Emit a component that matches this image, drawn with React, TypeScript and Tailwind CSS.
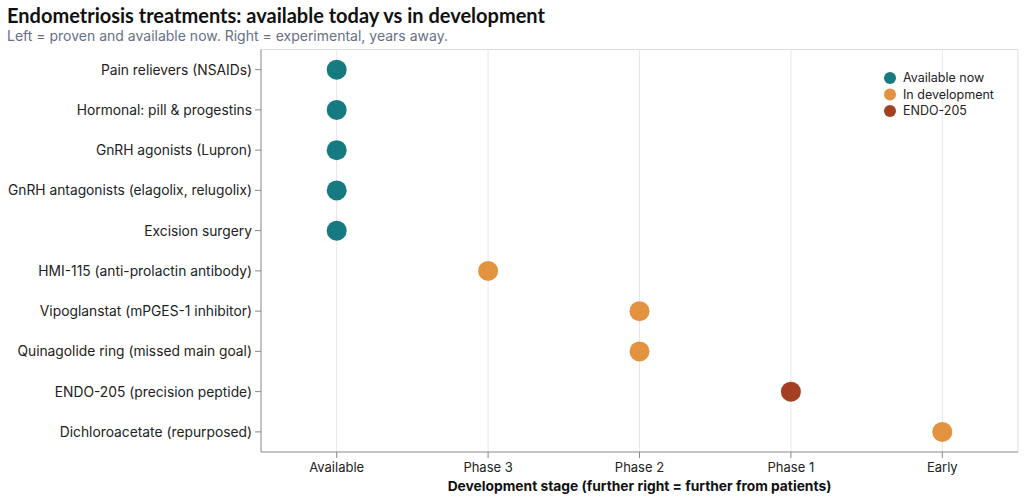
import React from "react";

const rows: { label: string; stage: number; kind: "a" | "d" | "e" }[] = [
  { label: "Pain relievers (NSAIDs)", stage: 0, kind: "a" },
  { label: "Hormonal: pill & progestins", stage: 0, kind: "a" },
  { label: "GnRH agonists (Lupron)", stage: 0, kind: "a" },
  { label: "GnRH antagonists (elagolix, relugolix)", stage: 0, kind: "a" },
  { label: "Excision surgery", stage: 0, kind: "a" },
  { label: "HMI-115 (anti-prolactin antibody)", stage: 1, kind: "d" },
  { label: "Vipoglanstat (mPGES-1 inhibitor)", stage: 2, kind: "d" },
  { label: "Quinagolide ring (missed main goal)", stage: 2, kind: "d" },
  { label: "ENDO-205 (precision peptide)", stage: 3, kind: "e" },
  { label: "Dichloroacetate (repurposed)", stage: 4, kind: "d" },
];

const stages = ["Available", "Phase 3", "Phase 2", "Phase 1", "Early"];
const colors = { a: "#167a81", d: "#e3923f", e: "#a53f21" };

const L = 261;
const R = 1018;
const T = 49.5;
const B = 452;
const xStep = (R - L) / 5;
const yStep = (B - T) / 10;
const xc = (i: number) => L + xStep * (i + 0.5);
const yc = (i: number) => T + yStep * (i + 0.5);

const font = "Inter, 'Noto Sans', sans-serif";

export default function App() {
  return (
    <div className="w-[1024px] h-[499px] bg-white overflow-hidden flex flex-col">
      <div className="pl-[7px] pt-[4px]">
        <div className="h-[22px] leading-[22px] text-[20px] font-bold text-[#111111] font-['Lato',sans-serif] whitespace-nowrap">
          Endometriosis treatments: available today vs in development
        </div>
        <div className="h-[18px] leading-[18px] pt-[1px] text-[14px] text-[#667085] font-['Inter',sans-serif] whitespace-nowrap">
          Left = proven and available now. Right = experimental, years away.
        </div>
      </div>
      <svg width={1024} height={455} viewBox="0 44 1024 455" className="block" fontFamily={font}>
        {stages.map((s, i) => (
          <line key={s} x1={xc(i)} x2={xc(i)} y1={T} y2={B} stroke="#e6e6e6" strokeWidth={1} />
        ))}
        <line x1={L} x2={R} y1={T} y2={T} stroke="#dddddd" strokeWidth={1} />
        <line x1={R} x2={R} y1={T} y2={B} stroke="#dddddd" strokeWidth={1} />
        <line x1={L} x2={L} y1={T} y2={B} stroke="#888888" strokeWidth={1} />
        <line x1={L} x2={R} y1={B} y2={B} stroke="#888888" strokeWidth={1} />
        {rows.map((r, i) => (
          <g key={r.label}>
            <line x1={L - 6} x2={L} y1={yc(i)} y2={yc(i)} stroke="#888888" strokeWidth={1} />
            <text x={L - 9} y={yc(i) + 5} textAnchor="end" fontSize={13.8} fill="#222222">
              {r.label}
            </text>
          </g>
        ))}
        {stages.map((s, i) => (
          <g key={s}>
            <line x1={xc(i)} x2={xc(i)} y1={B} y2={B + 6} stroke="#888888" strokeWidth={1} />
            <text x={xc(i)} y={472} textAnchor="middle" fontSize={13} fill="#222222">
              {s}
            </text>
          </g>
        ))}
        <text
          x={(L + R) / 2}
          y={490.5}
          textAnchor="middle"
          fontSize={13.8}
          fontWeight={700}
          fill="#111111"
        >
          Development stage (further right = further from patients)
        </text>
        {rows.map((r, i) => (
          <circle key={r.label} cx={xc(r.stage)} cy={yc(i)} r={10} fill={colors[r.kind]} />
        ))}
        {[
          { t: "Available now", c: colors.a },
          { t: "In development", c: colors.d },
          { t: "ENDO-205", c: colors.e },
        ].map((l, i) => (
          <g key={l.t}>
            <circle cx={890} cy={78 + i * 16.5} r={6} fill={l.c} />
            <text x={903} y={78 + i * 16.5 + 4.3} fontSize={12.5} fill="#222222">
              {l.t}
            </text>
          </g>
        ))}
      </svg>
    </div>
  );
}
